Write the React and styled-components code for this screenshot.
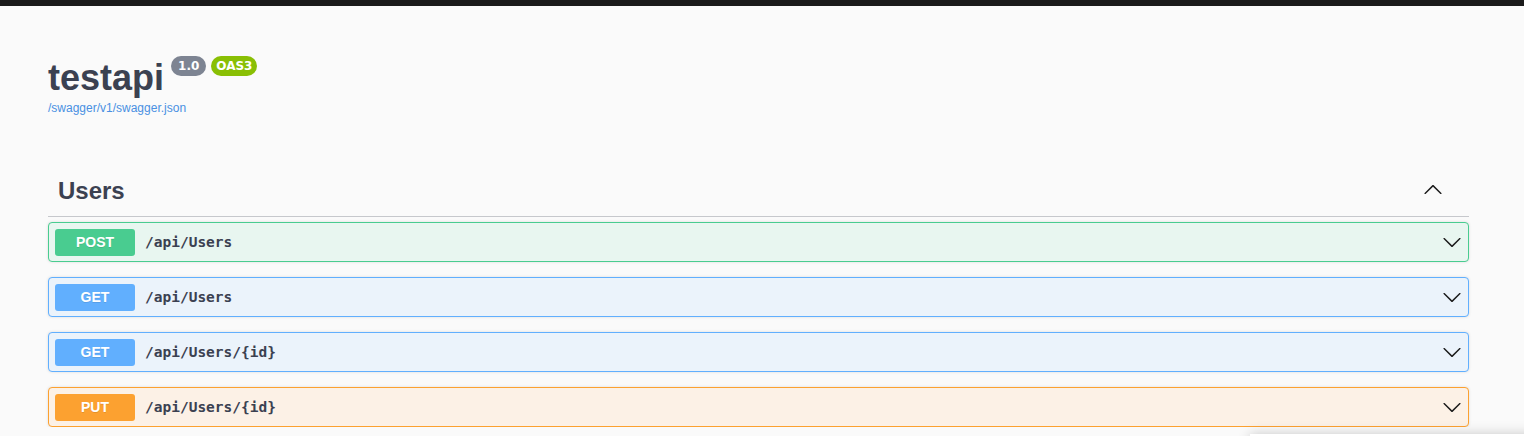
import styled, { createGlobalStyle } from "styled-components";

const Global = createGlobalStyle`
  html, body {
    margin: 0;
    padding: 0;
    background: #fafafa;
    font-family: "Liberation Sans", Arial, sans-serif;
    color: #3b4151;
  }
`;

const methods = {
  post: { main: "#49cc90", bg: "#e8f6f0" },
  get: { main: "#61affe", bg: "#ebf3fb" },
  put: { main: "#fca130", bg: "#fcf1e6" },
};

const ops = [
  { method: "post", path: "/api/Users" },
  { method: "get", path: "/api/Users" },
  { method: "get", path: "/api/Users/{id}" },
  { method: "put", path: "/api/Users/{id}" },
];

const Arrow = ({ up }) => (
  <svg width="20" height="20" viewBox="0 0 20 20" style={up ? { transform: "rotate(180deg)" } : undefined}>
    <path
      fill="#1b1b1b"
      d="M17.418 6.109c.272-.268.709-.268.979 0s.271.701 0 .969l-7.908 7.83c-.27.268-.707.268-.979 0l-7.908-7.83c-.27-.268-.27-.701 0-.969.271-.268.709-.268.979 0L10 13.25l7.418-7.141z"
    />
  </svg>
);

const App = () => {
  return (
    <>
      <Global />
      <TopBar />
      <Wrapper>
        <Info>
          <TitleRow>
            <Title>testapi</Title>
            <Badge>1.0</Badge>
            <Badge $green>OAS3</Badge>
          </TitleRow>
          <SpecLink>/swagger/v1/swagger.json</SpecLink>
        </Info>

        <TagHeader>
          <span>Users</span>
          <ArrowButton>
            <Arrow up />
          </ArrowButton>
        </TagHeader>

        <OpList>
          {ops.map((op, i) => (
            <Op key={i} $method={op.method}>
              <MethodBadge $method={op.method}>{op.method.toUpperCase()}</MethodBadge>
              <Path>{op.path}</Path>
              <RowArrow>
                <Arrow />
              </RowArrow>
            </Op>
          ))}
        </OpList>
      </Wrapper>
      <Toast />
    </>
  );
};

export default App;

const TopBar = styled.div`
  height: 6px;
  background: #1b1b1b;
`;

const Wrapper = styled.div`
  padding: 0 55px 0 48px;
`;

const Info = styled.div`
  margin: 51px 0 52px;
`;

const TitleRow = styled.div`
  display: flex;
  align-items: flex-start;
`;

const Title = styled.h2`
  margin: 0;
  font-size: 36px;
  line-height: 41px;
  font-weight: bold;
  color: #3b4151;
`;

const Badge = styled.span`
  display: inline-flex;
  align-items: center;
  height: 20px;
  margin: -1px 0 0 ${(p) => (p.$green ? "5px" : "7px")};
  padding: 0 ${(p) => (p.$green ? "5px" : "7px")};
  border-radius: 57px;
  background: ${(p) => (p.$green ? "#89bf04" : "#7d8492")};
  color: #fff;
  font-family: "DejaVu Sans", sans-serif;
  font-weight: bold;
  font-size: 12px;
`;

const SpecLink = styled.a`
  display: block;
  margin-top: 3px;
  font-size: 12px;
  line-height: 14px;
  color: #4990e2;
  cursor: pointer;
`;

const TagHeader = styled.h3`
  display: flex;
  align-items: center;
  justify-content: space-between;
  margin: 0 0 5px;
  padding: 9px 26px 11px 10px;
  height: 29px;
  border-bottom: 1px solid #c6c8cc;
  font-size: 24px;
  font-weight: bold;
  color: #3b4151;
`;

const ArrowButton = styled.span`
  display: flex;
  margin-top: -2px;
`;

const OpList = styled.div`
  display: flex;
  flex-direction: column;
  gap: 15px;
`;

const Op = styled.div`
  display: flex;
  align-items: center;
  height: 28px;
  padding: 5px 6px 5px 6px;
  border: 1px solid ${(p) => methods[p.$method].main};
  border-radius: 4px;
  background: ${(p) => methods[p.$method].bg};
  box-shadow: 0 0 3px rgba(0, 0, 0, 0.12);
`;

const MethodBadge = styled.span`
  display: flex;
  align-items: center;
  justify-content: center;
  width: 80px;
  height: 27px;
  border-radius: 3px;
  background: ${(p) => methods[p.$method].main};
  color: #fff;
  font-size: 14px;
  font-weight: bold;
  text-shadow: 0 1px 0 rgba(0, 0, 0, 0.1);
`;

const Path = styled.span`
  flex: 1;
  margin-left: 10px;
  font-family: "DejaVu Sans Mono", monospace;
  font-size: 14.5px;
  font-weight: bold;
  color: #3b4151;
`;

const RowArrow = styled.span`
  display: flex;
`;

const Toast = styled.div`
  position: fixed;
  left: 1250px;
  top: 434px;
  width: 320px;
  height: 120px;
  background: #fff;
  box-shadow: 0 0 12px rgba(0, 0, 0, 0.2);
`;
